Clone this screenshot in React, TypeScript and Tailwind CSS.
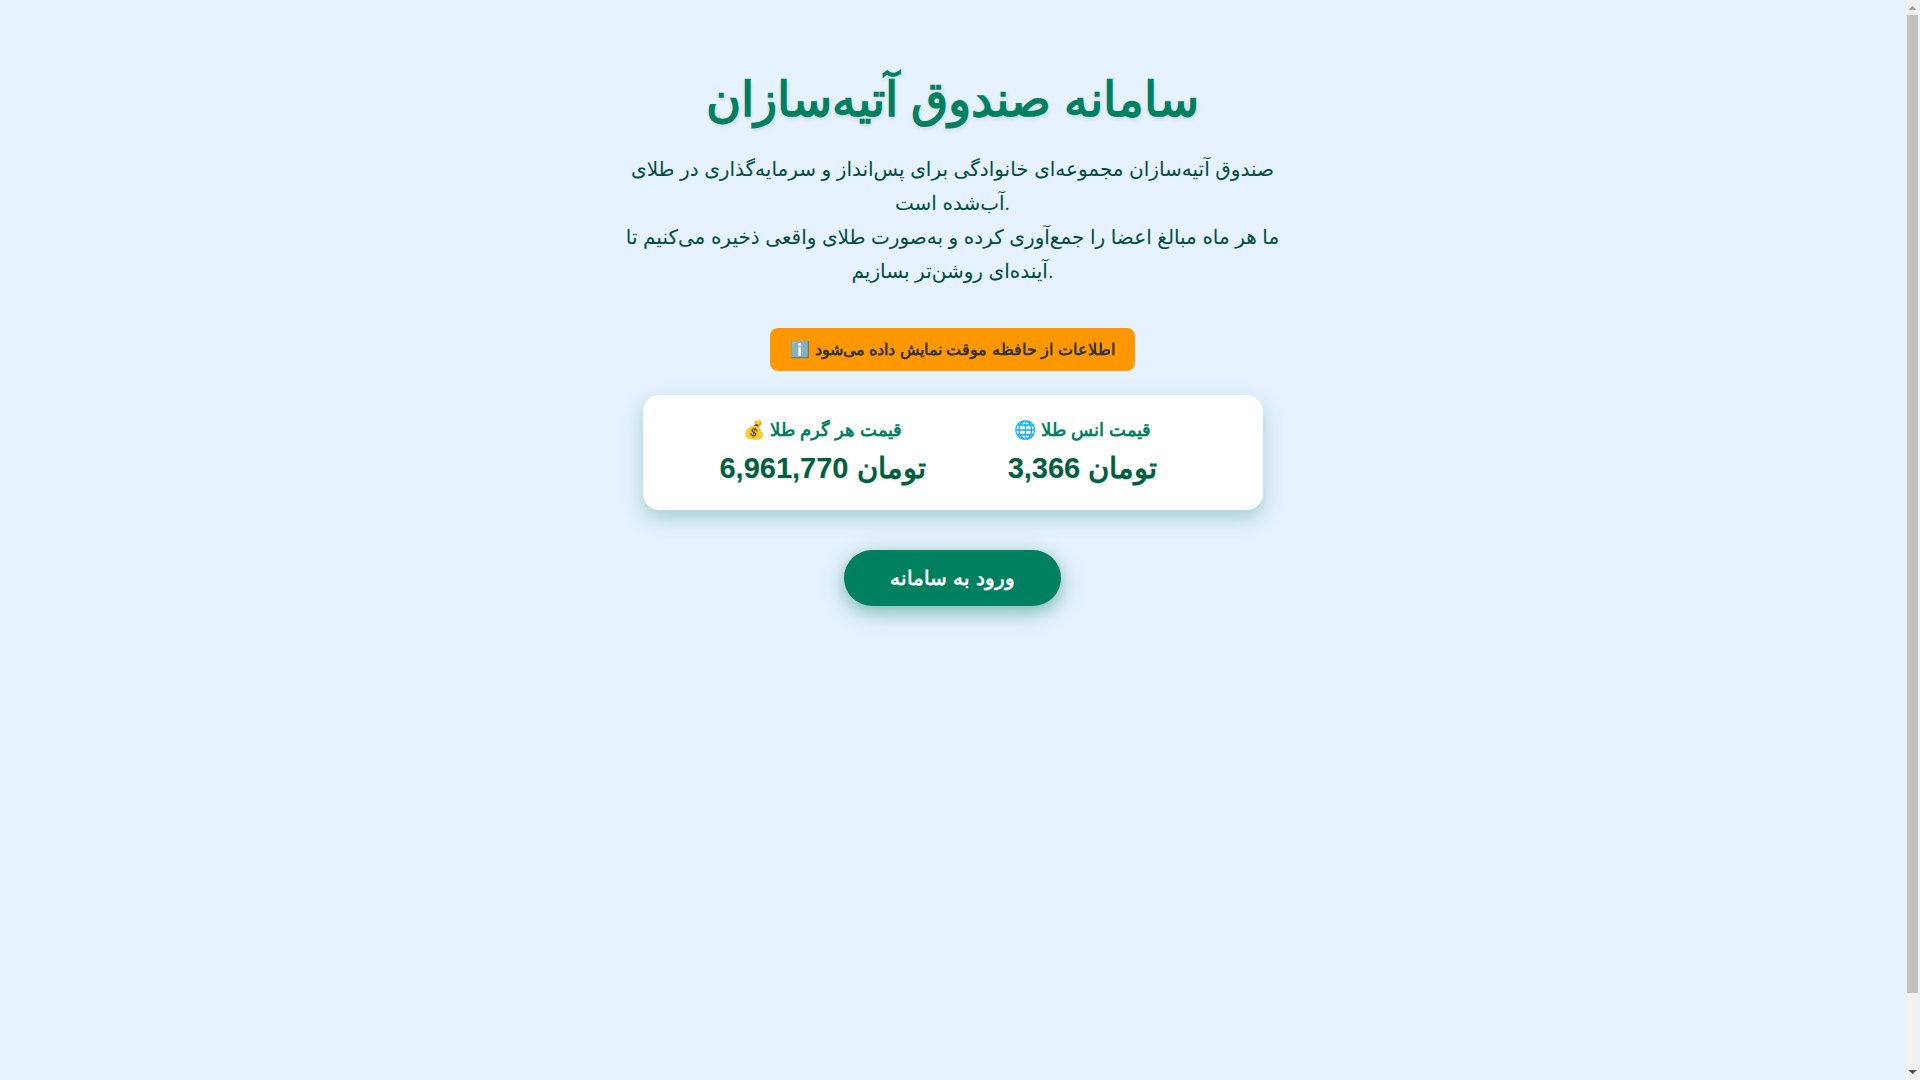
const PRICES = [
  { icon: '💰', label: 'قیمت هر گرم طلا', value: '6,961,770' },
  { icon: '🌐', label: 'قیمت انس طلا', value: '3,366' },
]

function Scrollbar() {
  return (
    <div aria-hidden="true" className="w-[15px] shrink-0 flex flex-col items-center bg-[#f1f1f1]">
      <svg className="h-[15px] w-[15px] shrink-0" viewBox="0 0 15 15" fill="#a3a3a3" shapeRendering="crispEdges">
        <path d="M7 6h1v1h1v1h1v1h1v1H4V9h1V8h1V7h1z" />
      </svg>
      <div className="flex-1 w-full flex flex-col px-[2px]">
        <div className="grow-[978] bg-[#c1c1c1]" />
        <div className="grow-[72]" />
      </div>
      <svg className="h-[15px] w-[15px] shrink-0" viewBox="0 0 15 15" fill="#505050" shapeRendering="crispEdges">
        <path d="M4 5h7v1h-1v1H9v1H8v1H7V8H6V7H5V6H4z" />
      </svg>
    </div>
  )
}

export default function App() {
  return (
    <div lang="fa" className="min-h-screen flex bg-[#e6f2ff] text-[#004d40] font-['Liberation_Sans',sans-serif]">
      <main className="flex-1 py-10 px-5 flex flex-col items-center text-center">

        <h1 className="mt-8 mb-6 text-[48px] leading-[56px] font-bold text-[#00805e]
          [text-shadow:1px_2px_4px_rgba(0,0,0,0.1)]">
          سامانه صندوق آتیه‌سازان
        </h1>

        <p className="max-w-[680px] mb-10 text-[20px] leading-[34px] font-['Liberation_Sans','DejaVu_Sans',sans-serif]">
          صندوق آتیه‌سازان مجموعه‌ای خانوادگی برای پس‌انداز و سرمایه‌گذاری در طلای آب‌شده است.
          <br />
          ما هر ماه مبالغ اعضا را جمع‌آوری کرده و به‌صورت طلای واقعی ذخیره می‌کنیم تا آینده‌ای روشن‌تر بسازیم.
        </p>

        {/* Cache notice */}
        <div className="mb-6 px-5 py-3 rounded-lg bg-[#ff9800] text-[#333] text-[16px] leading-[19px] font-bold">
          ℹ️ اطلاعات از حافظه موقت نمایش داده می‌شود
        </div>

        {/* Prices */}
        <section className="w-full max-w-[620px] mb-10 pt-[25px] pb-[23px] flex justify-center gap-10 rounded-2xl
          bg-white shadow-[0_8px_20px_rgba(0,128,94,0.3)]">
          {PRICES.map(p => (
            <div key={p.label} className="w-[220px]">
              <h2 className="mb-2 text-[18px] leading-[21px] font-bold text-[#00805e]">
                {p.icon} {p.label}
              </h2>
              <div className="text-[29px] leading-[38px] font-bold text-[#005f40]
                [text-shadow:1px_1px_2px_rgba(0,0,0,0.1)]">
                {p.value} تومان
              </div>
            </div>
          ))}
        </section>

        <button type="button" className="px-[46px] py-4 rounded-full bg-[#00805e] text-white text-[20px] leading-6
          font-bold cursor-pointer shadow-[0_6px_20px_rgba(0,128,94,0.5)]">
          ورود به سامانه
        </button>
      </main>

      <Scrollbar />
    </div>
  )
}
